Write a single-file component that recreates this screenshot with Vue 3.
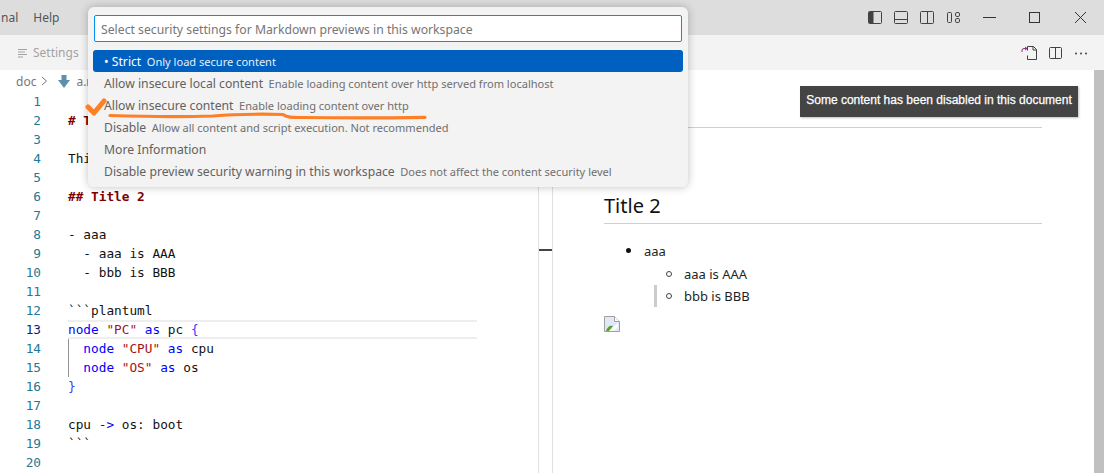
<script setup>
const K = 'k', S = 's', H = 'h', B = 'b', N = 'n'
const lines = [
  [],
  [[H, '# T']],
  [],
  [[N, 'Thi']],
  [],
  [[H, '## Title 2']],
  [],
  [[N, '- aaa']],
  [[N, '  - aaa is AAA']],
  [[N, '  - bbb is BBB']],
  [],
  [[N, '```plantuml']],
  [[K, 'node'], [N, ' '], [S, '"PC"'], [N, ' '], [K, 'as'], [N, ' pc '], [B, '{']],
  [[N, '  '], [K, 'node'], [N, ' '], [S, '"CPU"'], [N, ' '], [K, 'as'], [N, ' cpu']],
  [[N, '  '], [K, 'node'], [N, ' '], [S, '"OS"'], [N, ' '], [K, 'as'], [N, ' os']],
  [[B, '}']],
  [],
  [[N, 'cpu '], [K, '->'], [N, ' os: boot']],
  [[N, '```']],
  [],
]
const items = [
  ['• Strict', 'Only load secure content'],
  ['Allow insecure local content', 'Enable loading content over http served from localhost'],
  ['Allow insecure content', 'Enable loading content over http'],
  ['Disable', 'Allow all content and script execution. Not recommended'],
  ['More Information', ''],
  ['Disable preview security warning in this workspace', 'Does not affect the content security level'],
]
</script>

<template>
  <div class="app">
    <header class="titlebar">
      <nav class="menu"><span>nal</span><span>Help</span></nav>
      <div class="layout-icons">
        <svg width="15" height="15" viewBox="0 0 15 15"><rect x="0.5" y="1.5" width="13" height="12" rx="1" fill="none" stroke="#424242"/><rect x="1" y="2" width="4.5" height="11" fill="#424242"/></svg>
        <svg width="15" height="15" viewBox="0 0 15 15"><rect x="0.5" y="1.5" width="13" height="12" rx="1" fill="none" stroke="#424242"/><path d="M1 9.5h12" stroke="#424242"/></svg>
        <svg width="15" height="15" viewBox="0 0 15 15"><rect x="0.5" y="1.5" width="13" height="12" rx="1" fill="none" stroke="#424242"/><path d="M7.5 2v11" stroke="#424242"/></svg>
        <svg width="15" height="15" viewBox="0 0 15 15" fill="none" stroke="#424242"><rect x="1.5" y="2.5" width="4" height="10" rx="1"/><rect x="9.5" y="2.5" width="4" height="4" rx="1.4"/><rect x="9.5" y="8.5" width="4" height="4" rx="1.4"/></svg>
      </div>
      <div class="win-controls">
        <svg width="46" height="35" viewBox="0 0 46 35"><path d="M17 17.5h13" stroke="#333"/></svg>
        <svg width="46" height="35" viewBox="0 0 46 35"><rect x="17.5" y="12.5" width="10" height="10" fill="none" stroke="#333"/></svg>
        <svg width="46" height="35" viewBox="0 0 46 35"><path d="M17 12l11 11M28 12l-11 11" stroke="#333" fill="none"/></svg>
      </div>
    </header>

    <div class="tabbar">
      <div class="settings-tab">
        <svg width="10" height="10" viewBox="0 0 10 10"><path d="M0 1.5h9M0 4h7M0 6.500h9M0 9h5" stroke="#a3a3a3"/></svg>
        <span>Settings</span>
      </div>
      <div class="tab-actions">
        <svg width="17" height="16" viewBox="0 0 17 16" fill="none"><path d="M6.500 5.500V1.500h6l3 3v10h-9v-4" stroke="#424242"/><path d="M12 1.500v3.500h3.500" stroke="#424242"/><path d="M5.500 3.500H3a2 2 0 0 0-2 2V7" stroke="#8a2a8a"/><path d="M4 2l2 1.500L4 5" stroke="#8a2a8a"/></svg>
        <svg width="14" height="14" viewBox="0 0 14 14" fill="none" stroke="#424242"><rect x="0.500" y="1.500" width="12" height="11" rx="1"/><path d="M6.500 2v10"/></svg>
        <svg width="14" height="14" viewBox="0 0 14 14" fill="#424242"><circle cx="2" cy="7.500" r="1"/><circle cx="7" cy="7.500" r="1"/><circle cx="12" cy="7.500" r="1"/></svg>
      </div>
    </div>

    <main class="workbench">
      <section class="editor">
        <div class="crumbs">
          <span>doc</span>
          <svg width="9" height="12" viewBox="0 0 9 12"><path d="M2 2l4.500 4L2 10" fill="none" stroke="#777"/></svg>
          <svg class="md-icon" width="12" height="13" viewBox="0 0 12 13"><path d="M3.500 0h5v5H12L6 13 0 5h3.500z" fill="#5f8fac"/></svg>
          <span>a.m</span>
        </div>
        <div class="code">
          <div v-for="(line, i) in lines" :key="i" class="line" :class="{ active: i === 12 }">
            <span class="num">{{ i + 1 }}</span>
            <span class="text" :class="{ guide: i === 13 || i === 14 }"><span v-for="(seg, j) in line" :key="j" :class="seg[0]">{{ seg[1] }}</span></span>
          </div>
        </div>
      </section>

      <div class="sash"><span class="tick"></span></div>

      <section class="preview">
        <div class="h1-rule"></div>
        <h2>Title 2</h2>
        <ul class="top">
          <li>aaa
            <ul class="sub">
              <li>aaa is AAA</li>
              <li class="marked">bbb is BBB</li>
            </ul>
          </li>
        </ul>
        <svg class="broken" width="16" height="16" viewBox="0 0 16 16">
          <path d="M.5.500h10l5 5v10H.5z" fill="#dfe9f7" stroke="#a0a0a0"/>
          <path d="M10.500.500v5h5" fill="#fff" stroke="#a0a0a0"/>
          <path d="M2 15c1-4 4-6 7-5l-4 5z" fill="#5aa02c"/>
          <path d="M5 15l9-8v4l-4 4z" fill="#fff"/>
        </svg>
      </section>

      <div class="scrollbar"></div>
      <div class="tooltip">Some content has been disabled in this document</div>
    </main>

    <div class="picker">
      <div class="input">Select security settings for Markdown previews in this workspace</div>
      <div class="rows">
        <div v-for="(it, i) in items" :key="i" class="row" :class="{ selected: i === 0 }">
          <span class="label">{{ it[0] }}</span><span class="desc">{{ it[1] }}</span>
        </div>
      </div>
    </div>

    <svg class="ink" width="350" height="26" viewBox="0 0 350 26" fill="none" stroke="#ff7f27" stroke-linecap="round" stroke-linejoin="round">
      <path d="M3 9l6 6L19 3" stroke-width="5"/>
      <path d="M25 17.500C70 19 100 19 128 18c25-2 50-2 70-1.500 5 3.500 10 3 20 3 40 .5 80 .5 122-.2" stroke-width="3.200"/>
    </svg>
  </div>
</template>

<style>
html, body { margin: 0; background: #fff; }
</style>

<style scoped>
.app { position: relative; width: 1104px; height: 473px; overflow: hidden; display: flex; flex-direction: column; font-family: "Noto Sans", sans-serif; background: #fff; }
.titlebar { height: 35px; flex: none; background: #dddddd; display: flex; align-items: center; }
.menu { display: flex; gap: 15px; font-size: 12px; color: #555; padding-left: 1px; }
.layout-icons { margin-left: auto; display: flex; gap: 11px; align-items: center; }
.win-controls { display: flex; margin-left: 5px; }
.tabbar { height: 35px; flex: none; background: #f3f3f3; display: flex; align-items: center; }
.settings-tab { display: flex; align-items: center; gap: 5px; padding-left: 18px; font-size: 12px; color: #a3a3a3; }
.tab-actions { margin-left: auto; display: flex; align-items: center; gap: 11px; padding-right: 16px; }
.workbench { position: relative; flex: 1; display: flex; min-height: 0; }
.editor { width: 538px; flex: none; }
.crumbs { height: 22px; display: flex; align-items: center; gap: 4px; padding-left: 16px; font-size: 12px; color: #777; }
.md-icon { margin: 0 2px 0 5px; }
.code { font-family: "DejaVu Sans Mono", monospace; font-size: 12.75px; }
.line { height: 19px; line-height: 19px; display: flex; white-space: pre; }
.num { width: 41px; text-align: right; color: #237893; flex: none; }
.text { margin-left: 27px; flex: 1; max-width: 409px; }
.guide { box-shadow: inset 1px 0 0 #939393; }
.active .num { color: #0b216f; }
.active .text { box-shadow: inset 0 2px 0 #eeeeee, inset 0 -2px 0 #eeeeee; }
.k { color: #0000ff; }
.s { color: #a31515; }
.h { color: #800000; font-weight: 700; }
.b { color: #3b3bff; }
.n { color: #111; }
.sash { position: relative; flex: none; border-left: 1px solid #e0e0e0; border-right: 1px solid #e0e0e0; box-sizing: border-box; width: 15px; }
.tick { position: absolute; left: 0; right: 0; top: 179px; height: 2px; background: #444; }
.preview { flex: 1; padding-left: 51px; padding-right: 52px; color: #1f1f1f; font-size: 13px; min-width: 0; }
.h1-rule { margin-top: 57px; border-bottom: 1px solid #d0d0d0; }
.preview h2 { margin: 63px 0 0; height: 32px; line-height: 30px; font-size: 20px; font-weight: 400; color: #111; border-bottom: 1px solid #d0d0d0; }
.preview ul { margin: 16px 0 0; padding-left: 40px; list-style: none; }
.preview li { position: relative; line-height: 22px; }
.top > li::after { content: ""; position: absolute; left: -18px; top: 8px; width: 5px; height: 5px; border-radius: 50%; background: #111; }
.preview .sub { margin: 1px 0 0; padding-left: 40px; }
.sub > li::after { content: ""; position: absolute; left: -18px; top: 8px; width: 6px; height: 6px; box-sizing: border-box; border-radius: 50%; border: 1.3px solid #444; }
.marked::before { content: ""; position: absolute; left: -30px; top: 0; width: 3px; height: 22px; background: #cccccc; }
.broken { display: block; margin-top: 9px; }
.scrollbar { width: 10px; flex: none; background: #c0c0c0; }
.tooltip { position: absolute; left: 800px; top: 16px; width: 278px; height: 31px; box-sizing: border-box; background: #444444; color: #fff; font: 400 12px/29px "Liberation Sans", sans-serif; -webkit-text-stroke: .25px #fff; text-align: center; box-shadow: 1px 1px 2px rgba(0,0,0,.25); white-space: nowrap; }
.picker { position: absolute; left: 88px; top: 7px; width: 600px; height: 180px; box-sizing: border-box; padding: 8px 5px; background: #f3f3f3; border-radius: 6px; box-shadow: 0 0 8px rgba(0,0,0,.25); }
.input { height: 27px; margin: 0 1px; box-sizing: border-box; border: 1px solid #0090f1; border-radius: 2px; background: #fff; color: #767676; font-size: 12.22px; line-height: 27px; padding-left: 6px; white-space: nowrap; }
.rows { margin-top: 8px; }
.row { height: 22px; line-height: 24px; padding-left: 11px; border-radius: 3px; color: #616161; white-space: nowrap; font-size: 12.2px; }
.desc { margin-left: 5.5px; font-size: 11.05px; opacity: .9; }
.row.selected { background: #0060c0; color: #fff; }
.ink { position: absolute; left: 85px; top: 98px; pointer-events: none; }
</style>
